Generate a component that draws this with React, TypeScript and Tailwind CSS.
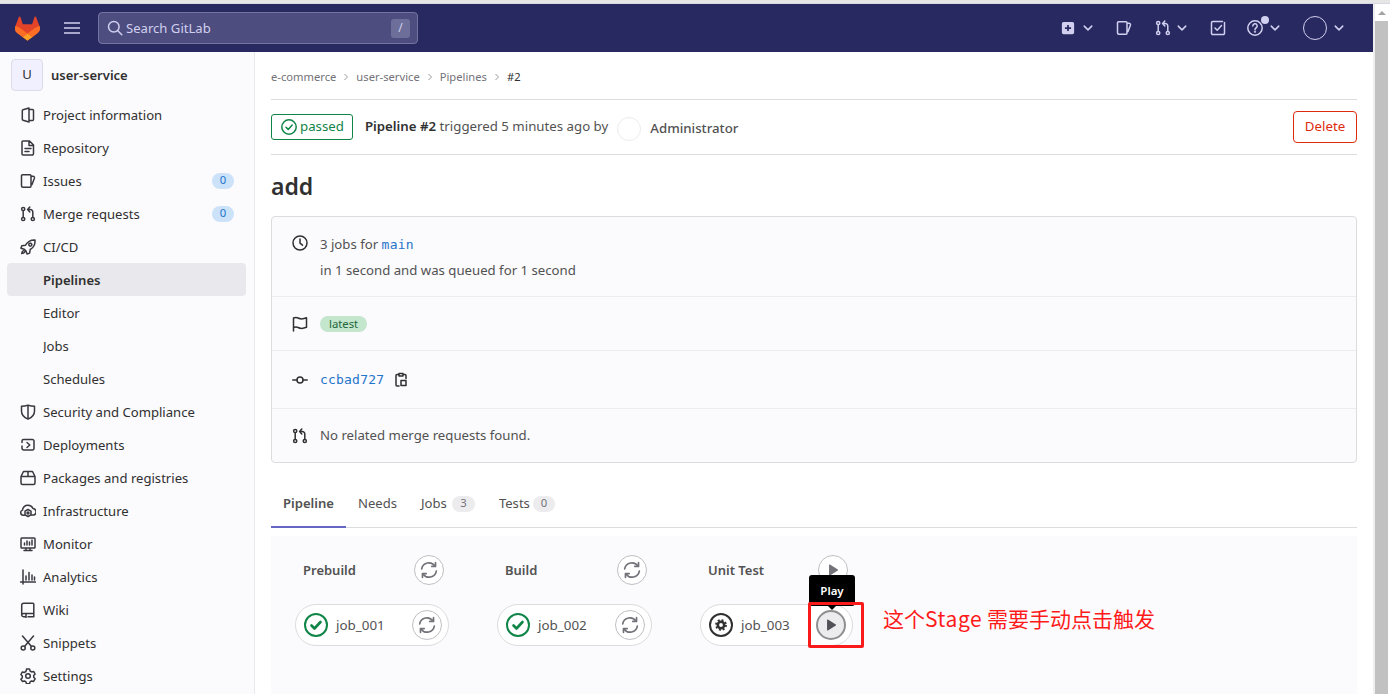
import type { ReactNode } from 'react';

type IconProps = { children: ReactNode; className?: string };

function Icon({ children, className = 'w-4 h-4' }: IconProps) {
  return (
    <svg viewBox="0 0 16 16" fill="none" stroke="currentColor" strokeWidth={1.5} strokeLinecap="round" strokeLinejoin="round" className={`shrink-0 ${className}`}>
      {children}
    </svg>
  );
}

const MrPaths = () => (
  <>
    <circle cx="3.2" cy="3" r="1.6" />
    <circle cx="3.2" cy="13" r="1.6" />
    <circle cx="12.8" cy="13" r="1.6" />
    <path d="M3.2 4.8v6.4M12.8 11.2V6a2.5 2.5 0 0 0-2.5-2.5H8M9.8 1L7.6 3.5 9.8 6" />
  </>
);
const IssuePaths = () => (
  <path d="M2.5 1.75h7.5a1 1 0 0 1 1 1V13.25a1 1 0 0 1-1 1H3a1.5 1.5 0 0 1-1.5-1.5V2.75a1 1 0 0 1 1-1ZM11 3.25h2a1.5 1.5 0 0 1 1.4 2L12 11.5" />
);

const sidebarIcons: Record<string, ReactNode> = {
  info: <path d="M9 1 3 2.800a1 1 0 0 0-.7 1v8.400a1 1 0 0 0 .7 1L9 15V1ZM9 2.500h3.500a1 1 0 0 1 1 1v9a1 1 0 0 1-1 1H9" />,
  repo: <path d="M3 .9h6.500L13.500 5v8.600a1.500 1.500 0 0 1-1.500 1.500H3a1 1 0 0 1-1-1V2a1 1 0 0 1 1-1.100ZM9 1v4.500h4.500M5 8.500h6M5 11.500h4" />,
  issues: <IssuePaths />,
  mr: <MrPaths />,
  rocket: <path d="M15 1c-4.500-.2-7.500 1.700-9.500 5.200l-3.700.5L.9 9.200l3.400 1.100 1.700 1.700 1.100 3.100 2.500-1 .6-3.600C13.500 8.700 15.300 5.500 15 1ZM3.800 11.400C2.500 12 1.800 13 1.700 14.600c1.500-.1 2.600-.8 3.200-2M10.300 4.200a1.500 1.500 0 1 0 .01 0" />,
  shield: <path d="M8 1.100c2 .8 4.200 1.200 6.500 1.200V7c0 3.700-2.300 6.500-6.500 8.100C3.800 13.500 1.500 10.700 1.500 7V2.300C3.800 2.300 6 1.900 8 1.100ZM8 1.500v13" />,
  deploy: <path d="M2 5.500V4a1.500 1.500 0 0 1 1.500-1.500h9A1.500 1.500 0 0 1 14 4v7.500a1.500 1.500 0 0 1-1.500 1.500H4a2 2 0 0 1-2-2V9M7 5.500 9.800 8 7 10.500" />,
  package: <path d="M3.500 1.500h9L15 6.500v6.500a1.500 1.500 0 0 1-1.500 1.500h-11A1.500 1.500 0 0 1 1 13V6.500L3.500 1.500ZM1.200 6.500h13.600M8 1.500v5" />,
  infra: (
    <>
      <path d="M4.500 12.200H3.200a2.600 2.600 0 0 1-.6-5.100 4.200 4.200 0 0 1 .1-1A5.500 5.500 0 0 1 13 5.500a3.400 3.400 0 0 1 1 6.500h-2.500" />
      <path d="M8 6.500l3 1.700v3.600l-3 1.700-3-1.700V8.200l3-1.700Z" />
      <circle cx="8" cy="10" r="1" />
    </>
  ),
  monitor: <path d="M1.800 2h12.400a.8.8 0 0 1 .8.800v8.400a.8.8 0 0 1-.8.800H1.800a.8.8 0 0 1-.8-.8V2.800a.8.8 0 0 1 .8-.8ZM6 12v2.500M10 12v2.500M4 14.500h8M4.500 9V7M7 9V5M9.500 9V6M12 9V4" />,
  analytics: <path d="M3 1v14M.5 13h15M6 11V7M9 11V3.500M12 11V6M14.500 11V8" />,
  wiki: <path d="M4 1.200h8.800a1 1 0 0 1 1 1v9.300H3.500a1.800 1.800 0 0 0-1.800 1.700v-10A2 2 0 0 1 4 1.200ZM1.700 13.200a1.800 1.800 0 0 0 1.800 1.500h2.500M13.800 11.500v3.200H8M6 11.500v4" />,
  snippets: (
    <>
      <circle cx="3.200" cy="13" r="2" />
      <circle cx="12.800" cy="13" r="2" />
      <path d="M2.500 1 11.500 11.500M13.500 1 4.500 11.500" />
    </>
  ),
  settings: (
    <>
      <path d="M6.500 1h3l.6 2 1.500.9 2-.5 1.500 2.600-1.400 1.500v1.800l1.400 1.500-1.500 2.600-2-.5-1.500.9-.6 2h-3l-.6-2-1.500-.9-2 .5L.9 11.300l1.400-1.500V8L.9 6.500l1.500-2.600 2 .5 1.500-.9.600-2Z" />
      <circle cx="8" cy="8" r="2.300" />
    </>
  ),
};

const navItems = [
  { label: 'Project information', icon: 'info' },
  { label: 'Repository', icon: 'repo' },
  { label: 'Issues', icon: 'issues', count: '0' },
  { label: 'Merge requests', icon: 'mr', count: '0' },
  { label: 'CI/CD', icon: 'rocket' },
  { label: 'Pipelines', active: true },
  { label: 'Editor' },
  { label: 'Jobs' },
  { label: 'Schedules' },
  { label: 'Security and Compliance', icon: 'shield' },
  { label: 'Deployments', icon: 'deploy' },
  { label: 'Packages and registries', icon: 'package' },
  { label: 'Infrastructure', icon: 'infra' },
  { label: 'Monitor', icon: 'monitor' },
  { label: 'Analytics', icon: 'analytics' },
  { label: 'Wiki', icon: 'wiki' },
  { label: 'Snippets', icon: 'snippets' },
  { label: 'Settings', icon: 'settings' },
];

function Logo() {
  return (
    <svg viewBox="0 0 25 24" className="w-[25px] h-[25px] shrink-0">
      <path fill="#E24329" d="m24.507 9.5-.034-.09L21.082.562a.896.896 0 0 0-1.694.091l-2.29 7.01H7.825L5.535.653a.898.898 0 0 0-1.694-.09L.451 9.411.416 9.5a6.297 6.297 0 0 0 2.09 7.278l.012.01.03.022 5.16 3.867 2.56 1.935 1.554 1.176a1.051 1.051 0 0 0 1.268 0l1.555-1.176 2.56-1.935 5.197-3.89.014-.01A6.297 6.297 0 0 0 24.507 9.5Z" />
      <path fill="#FC6D26" d="m24.507 9.5-.034-.09a11.44 11.44 0 0 0-4.56 2.051l-7.447 5.632 4.742 3.584 5.197-3.89.014-.01A6.297 6.297 0 0 0 24.507 9.5Z" />
      <path fill="#FCA326" d="m7.707 20.677 2.56 1.935 1.555 1.176a1.051 1.051 0 0 0 1.268 0l1.555-1.176 2.56-1.935-4.743-3.584-4.755 3.584Z" />
      <path fill="#FC6D26" d="M5.01 11.461a11.43 11.43 0 0 0-4.56-2.05L.416 9.5a6.297 6.297 0 0 0 2.09 7.278l.012.01.03.022 5.16 3.867 4.745-3.584-7.444-5.632Z" />
    </svg>
  );
}

function Chevron({ className = 'w-3 h-3' }: { className?: string }) {
  return (
    <Icon className={className}>
      <path d="M3 5.500 8 10.500l5-5" strokeWidth={2} />
    </Icon>
  );
}

function Header() {
  return (
    <header className="h-12 bg-[#292961] flex items-center text-[#d1d0f0] shrink-0">
      <div className="ml-[15px]">
        <Logo />
      </div>
      <svg viewBox="0 0 16 16" className="w-4 h-4 ml-6 text-[#d1d0f0]" stroke="currentColor" strokeWidth={1.5}>
        <path d="M0 3h16M0 8h16M0 13h16" />
      </svg>
      <div className="ml-[18px] w-80 h-8 rounded-[4px] border border-[#7474a0] bg-[#4e4d7f] flex items-center pl-2 pr-[7px] text-[#d1d0f0]">
        <Icon>
          <circle cx="6.800" cy="6.800" r="5.300" />
          <path d="m10.800 10.800 4 4" />
        </Icon>
        <span className="ml-[3px] text-[13.1px] flex-1 pt-[1px]">Search GitLab</span>
        <span className="w-[19px] h-[19px] rounded-[3px] bg-[#6e6e9a] text-xs flex items-center justify-center">/</span>
      </div>
      <div className="ml-auto flex items-center">
        <svg viewBox="0 0 16 16" className="w-[14px] h-[14px]">
          <path fill="currentColor" fillRule="evenodd" d="M3 1h10a2 2 0 0 1 2 2v10a2 2 0 0 1-2 2H3a2 2 0 0 1-2-2V3a2 2 0 0 1 2-2Zm4 3.500v2.500H4.500v2H7v2.500h2V9h2.500V7H9V4.500H7Z" />
        </svg>
        <Chevron className="w-3 h-3 ml-[7px]" />
        <span className="ml-[22px]">
          <Icon><IssuePaths /></Icon>
        </span>
        <span className="ml-[23px]">
          <Icon><MrPaths /></Icon>
        </span>
        <Chevron className="w-3 h-3 ml-[5px]" />
        <span className="ml-[22px]">
          <Icon>
            <path d="M14.500 2.500v10.700a1.300 1.300 0 0 1-1.300 1.300H2.800a1.300 1.300 0 0 1-1.300-1.300V2.800a1.300 1.300 0 0 1 1.300-1.300h9.700M5 8l2.200 2.300L11.500 5.500" />
          </Icon>
        </span>
        <span className="relative ml-[21px] flex items-center">
          <Icon className="w-4 h-4">
            <circle cx="8" cy="8" r="7.200" />
            <path d="M5.800 6a2.200 2.200 0 1 1 3.200 2c-.7.4-1 .8-1 1.500" />
            <circle cx="8" cy="11.700" r=".4" />
          </Icon>
          <span className="absolute -top-[4px] left-[14px] w-2 h-2 rounded-full bg-[#d1d0f0]" />
        </span>
        <Chevron className="w-3 h-3 ml-[6px]" />
        <span className="ml-[22px] w-6 h-6 rounded-full border border-[#d1d0f0]" />
        <Chevron className="w-3 h-3 ml-[6px]" />
        <span className="w-[28px]" />
      </div>
    </header>
  );
}

function Sidebar() {
  return (
    <aside className="w-[255px] shrink-0 bg-[#fbfafd] border-r border-[#e9e9ec] pl-[7px] pr-[8px] text-[13.1px] text-[#303030] overflow-hidden">
      <div className="flex items-center h-[45px] pl-1 mb-[1px] pt-[1px]">
        <span className="w-8 h-8 rounded-[4px] border border-[#dcdce8] bg-[#f0f0ff] text-[#303030] flex items-center justify-center text-[13.1px]">U</span>
        <span className="ml-2 pt-[1px] text-[13px] font-semibold">user-service</span>
      </div>
      {navItems.map((item) => (
        <div
          key={item.label}
          className={`h-[33px] flex items-center rounded-[4px] pr-3 ${item.active ? 'bg-[#e9e8ec] font-semibold' : ''}`}
        >
          <span className="w-9 pl-[13px] shrink-0">
            {item.icon && <Icon className="w-4 h-4 text-[#3a383f]">{sidebarIcons[item.icon]}</Icon>}
          </span>
          <span className="flex-1 truncate pt-[2px]">{item.label}</span>
          {item.count && (
            <span className="w-[22px] h-4 rounded-full bg-[#cbe2f9] text-[#1f75cb] text-[11.3px] flex items-center justify-center">{item.count}</span>
          )}
        </div>
      ))}
    </aside>
  );
}

function Crumb({ label, last }: { label: string; last?: boolean }) {
  return (
    <>
      <span className={last ? 'text-[#303030]' : ''}>{label}</span>
      {!last && (
        <svg viewBox="0 0 16 16" className="w-2 h-2 mx-[6px] text-[#9a9a9f]" fill="none" stroke="currentColor" strokeWidth={2}>
          <path d="m5 2 6 6-6 6" />
        </svg>
      )}
    </>
  );
}

function RetryIcon({ className = 'w-[18px] h-[18px]' }: { className?: string }) {
  return (
    <Icon className={`text-[#737278] ${className}`}>
      <path d="M1.500 7a6.500 6.500 0 0 1 11.800-2.500M14.500 9a6.500 6.500 0 0 1-11.800 2.500" />
      <path d="M13.800 1.500v3.300h-3.300M2.200 14.500v-3.300h3.300" />
    </Icon>
  );
}

function PlayIcon({ dark }: { dark?: boolean }) {
  return (
    <svg viewBox="0 0 16 16" className={`w-[14px] h-[14px] ${dark ? 'text-[#535158]' : 'text-[#737278]'}`}>
      <path fill="currentColor" d="M3.500 2.200v11.600c0 .5.500.8 1 .5l9-5.800c.4-.2.400-.8 0-1l-9-5.800c-.5-.3-1 0-1 .5Z" />
    </svg>
  );
}

function CircleButton({ children, strong }: { children: ReactNode; strong?: boolean }) {
  return (
    <span
      className={`w-[30px] h-[30px] rounded-full flex items-center justify-center shrink-0 ${
        strong ? 'border-2 border-[#8f8f92] bg-[#ececef]' : 'border border-[#bfbfc3] bg-white'
      }`}
    >
      {children}
    </span>
  );
}

function StatusPassed() {
  return (
    <svg viewBox="0 0 24 24" className="w-6 h-6 shrink-0 text-[#108548]" fill="none" stroke="currentColor">
      <circle cx="12" cy="12" r="11" strokeWidth="2" />
      <path d="m7.500 12.500 3 3 6-6.500" strokeWidth="2.600" strokeLinecap="round" strokeLinejoin="round" />
    </svg>
  );
}

function StatusManual() {
  return (
    <svg viewBox="0 0 24 24" className="w-6 h-6 shrink-0 text-[#303030]" fill="none" stroke="currentColor">
      <circle cx="12" cy="12" r="11" strokeWidth="2" />
      <circle cx="12" cy="12" r="3.200" strokeWidth="2.600" />
      <circle cx="12" cy="12" r="5" strokeWidth="1.800" strokeDasharray="1.960 1.960" />
    </svg>
  );
}

const stages = [
  { title: 'Prebuild', job: 'job_001', width: 'w-[154px]', gap: 'mr-[48px]', manual: false },
  { title: 'Build', job: 'job_002', width: 'w-[155px]', gap: 'mr-[48px]', manual: false },
  { title: 'Unit Test', job: 'job_003', width: 'w-[153px]', gap: '', manual: true },
];

function Stage({ title, job, width, gap, manual }: (typeof stages)[number]) {
  return (
    <div className={`${width} ${gap} shrink-0`}>
      <div className="flex items-center justify-between pl-2 pr-[5px] h-[30px]">
        <span className="pt-[2px] text-[13px] font-semibold text-[#525252]">{title}</span>
        <CircleButton>{manual ? <PlayIcon /> : <RetryIcon />}</CircleButton>
      </div>
      <div className="relative mt-[19px] h-[42px] rounded-full border border-[#dcdcde] bg-white flex items-center pl-[8px] pr-[6px]">
        {manual ? <StatusManual /> : <StatusPassed />}
        <span className="ml-2 text-[13.4px] text-[#525252] flex-1">{job}</span>
        <CircleButton strong={manual}>{manual ? <PlayIcon dark /> : <RetryIcon />}</CircleButton>
        {manual && (
          <>
            <div className="absolute -top-[30px] left-[108px] w-[46px] h-[31px] bg-black rounded-[3px] text-white text-[11.5px] font-semibold flex items-center justify-center">
              Play
              <span className="absolute -bottom-1 left-[19px] border-x-4 border-t-4 border-x-transparent border-t-black" />
            </div>
            <div className="absolute -top-[3px] left-[107px] w-[56px] h-[46px] border-[3px] border-[#fb1a1a] rounded-[2px]" />
            <span className="absolute left-[182px] -top-[2px] whitespace-nowrap text-[21px] leading-[30px] text-[#ff1a1a] font-['Noto_Sans_CJK_SC','Noto_Sans',sans-serif]">
              这个<span className="tracking-[0.6px]">Stage</span> 需要手动点击触发
            </span>
          </>
        )}
      </div>
    </div>
  );
}

function InfoRow({ icon, children, className }: { icon: ReactNode; children: ReactNode; className: string }) {
  return (
    <div className={`flex px-5 text-[13.2px] text-[#525252] ${className}`}>
      <Icon className="w-4 h-4 text-[#303030] mr-3 shrink-0">{icon}</Icon>
      <div>{children}</div>
    </div>
  );
}

function Main() {
  return (
    <main className="flex-1 min-w-0 px-4 overflow-hidden text-[#303030]">
      <div className="h-12 border-b border-[#dcdcde] flex items-center text-[11.2px] text-[#737278] pt-[3px]">
        <Crumb label="e-commerce" />
        <Crumb label="user-service" />
        <Crumb label="Pipelines" />
        <Crumb label="#2" last />
      </div>
      <div className="h-[55px] border-b border-[#dcdcde] flex items-center text-[13.25px]">
        <span className="h-[26px] pl-[9px] pr-2 rounded-[3px] border border-[#108548] text-[#108548] flex items-center">
          <Icon className="w-4 h-4 mr-[3px]">
            <circle cx="8" cy="8" r="7.200" />
            <path d="m5 8.200 2.200 2.200 4-4.400" />
          </Icon>
          <span>passed</span>
        </span>
        <span className="ml-3 text-[#525252]">
          <b className="font-semibold text-[#303030]">Pipeline #2</b> triggered 5 minutes ago by
        </span>
        <span className="ml-[9px] w-6 h-6 rounded-full border border-[#ececef] bg-white mt-[3px]" />
        <span className="ml-[9px] mt-[3px] font-medium text-[#525252]">Administrator</span>
        <span className="ml-auto h-8 w-16 rounded-[4px] border border-[#dd2b0e] text-[#dd2b0e] flex items-center justify-center">Delete</span>
      </div>
      <h1 className="h-[61px] pt-[2px] flex items-center text-[23px] font-semibold text-[#303030]">add</h1>
      <section className="h-[247px] border border-[#dcdcde] rounded-[4px] bg-[#fbfafd]">
        <InfoRow
          className="h-[80px] pt-[18px] border-b border-[#ececef]"
          icon={
            <>
              <circle cx="8" cy="8" r="7" />
              <path d="M8 4v4.200l2.500 2" />
            </>
          }
        >
          <div className="leading-[20px] -mt-[1px]">
            3 jobs for <span className="font-['DejaVu_Sans_Mono',monospace] text-[#1f75cb] text-[13px] tracking-[0.2px]">main</span>
          </div>
          <div className="leading-[20px] mt-[5px]">in 1 second and was queued for 1 second</div>
        </InfoRow>
        <InfoRow
          className="h-[54px] items-center border-b border-[#ececef]"
          icon={<path d="M1.500 15V2c3.500-1.500 5 .5 7 .8 1.800.3 3.500 0 6-1v9.500c-2.500 1-4.200 1.300-6 1-2-.3-3.500-2.300-7-.8" />}
        >
          <span className="h-4 pt-[1px] px-[9px] rounded-full bg-[#c3e6cd] text-[#24663b] text-[11.3px] flex items-center">latest</span>
        </InfoRow>
        <InfoRow
          className="h-[58px] items-center border-b border-[#ececef]"
          icon={
            <>
              <circle cx="8" cy="8" r="3" />
              <path d="M.8 8H5M11 8h4.200" />
            </>
          }
        >
          <div className="flex items-center">
            <span className="font-['DejaVu_Sans_Mono',monospace] text-[#1f75cb] text-[13px] tracking-[0.2px]">ccbad727</span>
            <Icon className="w-4 h-4 ml-[9px] text-[#303030]">
              <path d="M5.500 2.500H4a1 1 0 0 0-1 1v9.500a1 1 0 0 0 1 1h2M10.500 2.500H12a1 1 0 0 1 1 1v3M6 1.500h4v2.500H6zM8 8.500h5v5H8z" />
            </Icon>
          </div>
        </InfoRow>
        <InfoRow className="h-[53px] items-center" icon={<MrPaths />}>
          No related merge requests found.
        </InfoRow>
      </section>
      <nav className="mt-[17px] h-[48px] border-b border-[#dcdcde] flex text-[13.1px] text-[#525252]">
        <span className="w-[75px] pt-[1px] flex items-center justify-center font-semibold border-b-2 border-[#6666c4] -mb-[1px]">Pipeline</span>
        <span className="ml-3 flex items-center">Needs</span>
        <span className="ml-6 flex items-center">
          Jobs
          <span className="ml-[5px] w-[23px] h-4 rounded-full bg-[#ececef] text-[#737278] text-[11.3px] flex items-center justify-center">3</span>
        </span>
        <span className="ml-6 flex items-center">
          Tests
          <span className="ml-[3px] w-[22px] h-4 rounded-full bg-[#ececef] text-[#737278] text-[11.3px] flex items-center justify-center">0</span>
        </span>
      </nav>
      <section className="mt-2 h-[200px] bg-[#fbfafd] pl-6 pt-[19px] flex">
        {stages.map((stage) => (
          <Stage key={stage.title} {...stage} />
        ))}
      </section>
    </main>
  );
}

function Scrollbar() {
  return (
    <div className="w-[17px] shrink-0 bg-white border-l-2 border-[#efefef] pl-0 pr-[2px] flex flex-col">
      <div className="h-[17px] flex items-center justify-center">
        <span className="border-x-[4px] border-b-[4px] border-x-transparent border-b-[#a3a3a3]" />
      </div>
      <div className="flex-1 bg-[#c1c1c1]" />
    </div>
  );
}

export default function App() {
  return (
    <div className="h-[694px] w-[1390px] overflow-hidden bg-white font-['Noto_Sans',sans-serif] flex flex-col">
      <div className="h-[4px] bg-[#e6e6e6] border-b border-[#d8d8e0] shrink-0" />
      <div className="flex-1 flex min-h-0">
        <div className="flex-1 min-w-0 flex flex-col">
          <Header />
          <div className="flex-1 flex min-h-0">
            <Sidebar />
            <Main />
          </div>
        </div>
        <Scrollbar />
      </div>
    </div>
  );
}
